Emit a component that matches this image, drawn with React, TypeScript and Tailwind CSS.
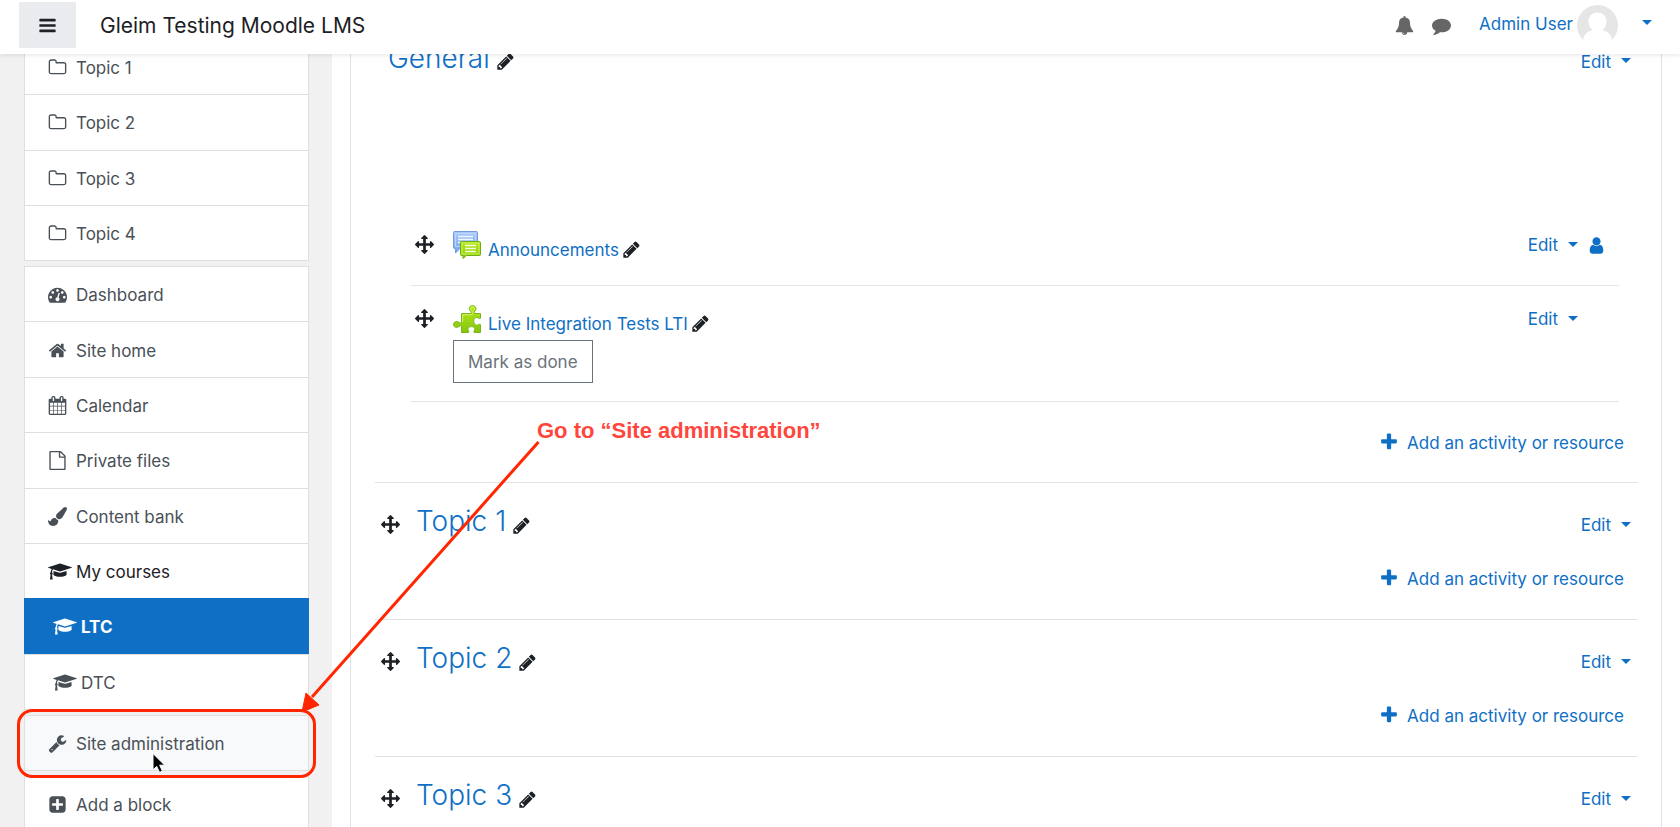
import type { ReactNode } from "react";

const paths = {
  bell: "M912 1696q0-16-16-16-59 0-101.5-42.5t-42.5-101.5q0-16-16-16t-16 16q0 73 51.5 124.5t124.5 51.5q16 0 16-16zm816-288q0 52-38 90t-90 38h-448q0 106-75 181t-181 75-181-75-75-181h-448q-52 0-90-38t-38-90q50-42 91-88t85-119.5 74.5-158.5 50-206 19.5-260q0-152 117-282.5t307-158.5q-8-19-8-39 0-40 28-68t68-28 68 28 28 68q0 20-8 39 190 28 307 158.5t117 282.5q0 139 19.5 260t50 206 74.5 158.5 85 119.5 91 88z",
  comment: "M1792 896q0 174-120 321.5t-326 233-450 85.5q-70 0-145-8-198 175-460 242-49 14-114 22-17 2-30.5-9t-17.5-29v-1q-3-4-.5-12t2-10 4.5-9.5l6-9 7-8.5 8-9q7-8 31-34.5t34.5-38 31-39.5 32.5-51 27-59 26-76q-157-89-247.5-220t-90.5-281q0-130 71-248.5t191-204.5 286-136.5 348-50.5q244 0 450 85.5t326 233 120 321.5z",
  home: "M1472 992v480q0 26-19 45t-45 19h-384v-384h-256v384h-384q-26 0-45-19t-19-45v-480q0-1 .5-3t.5-3l575-474 575 474q1 2 1 6zm223-69l-62 74q-8 9-21 11h-3q-13 0-21-7l-692-577-692 577q-12 8-24 7-13-2-21-11l-62-74q-8-10-7-23.5t11-21.5l719-599q32-26 76-26t76 26l244 204v-195q0-14 9-23t23-9h192q14 0 23 9t9 23v408l219 182q10 8 11 21.5t-7 23.5z",
  folder: "M1600 1312v-704q0-40-28-68t-68-28h-704q-40 0-68-28t-28-68v-64q0-40-28-68t-68-28h-320q-40 0-68 28t-28 68v960q0 40 28 68t68 28h1216q40 0 68-28t28-68zm128-704v704q0 92-66 158t-158 66h-1216q-92 0-158-66t-66-158v-960q0-92 66-158t158-66h320q92 0 158 66t66 158v32h672q92 0 158 66t66 158z",
  dashboard: "M384 1152q0-53-37.5-90.5t-90.5-37.5-90.5 37.5-37.5 90.5 37.5 90.5 90.5 37.5 90.5-37.5 37.5-90.5zm192-448q0-53-37.5-90.5t-90.5-37.5-90.5 37.5-37.5 90.5 37.5 90.5 90.5 37.5 90.5-37.5 37.5-90.5zm428 481l101-382q6-26-7.5-48.5t-38.5-29.5-48 6.5-30 39.5l-101 382q-60 5-107 43.5t-63 98.5q-20 77 20 146t117 89 146-20 89-117q16-60-6-117t-72-91zm660-33q0-53-37.5-90.5t-90.5-37.5-90.5 37.5-37.5 90.5 37.5 90.5 90.5 37.5 90.5-37.5 37.5-90.5zm-640-640q0-53-37.5-90.5t-90.5-37.5-90.5 37.5-37.5 90.5 37.5 90.5 90.5 37.5 90.5-37.5 37.5-90.5zm448 192q0-53-37.5-90.5t-90.5-37.5-90.5 37.5-37.5 90.5 37.5 90.5 90.5 37.5 90.5-37.5 37.5-90.5zm320 448q0 261-141 483-19 29-54 29h-1402q-35 0-54-29-141-221-141-483 0-182 71-348t191-286 286-191 348-71 348 71 286 191 191 286 71 348z",
  calendar: "M192 1664h288v-288h-288v288zm352 0h320v-288h-320v288zm-352-352h288v-320h-288v320zm352 0h320v-320h-320v320zm-352-384h288v-288h-288v288zm736 736h320v-288h-320v288zm-384-736h320v-288h-320v288zm768 736h288v-288h-288v288zm-384-352h320v-320h-320v320zm-352-864v-288q0-13-9.5-22.5t-22.5-9.5h-64q-13 0-22.5 9.5t-9.5 22.5v288q0 13 9.5 22.5t22.5 9.5h64q13 0 22.5-9.5t9.5-22.5zm736 864h288v-320h-288v320zm-384-384h320v-288h-320v288zm384 0h288v-288h-288v288zm32-480v-288q0-13-9.5-22.5t-22.5-9.5h-64q-13 0-22.5 9.5t-9.5 22.5v288q0 13 9.5 22.5t22.5 9.5h64q13 0 22.5-9.5t9.5-22.5zm384-64v1280q0 52-38 90t-90 38h-1408q-52 0-90-38t-38-90v-1280q0-52 38-90t90-38h128v-96q0-66 47-113t113-47h64q66 0 113 47t47 113v96h384v-96q0-66 47-113t113-47h64q66 0 113 47t47 113v96h128q52 0 90 38t38 90z",
  file: "M1596 380q28 28 48 76t20 88v1152q0 40-28 68t-68 28h-1344q-40 0-68-28t-28-68v-1600q0-40 28-68t68-28h896q40 0 88 20t76 48zm-444-244v376h376q-10-29-22-41l-313-313q-12-12-41-22zm384 1528v-1024h-416q-40 0-68-28t-28-68v-416h-768v1536h1280z",
  brush: "M1615 0q70 0 122.5 46.5t52.5 116.5q0 63-45 151-332 629-465 752-97 91-218 91-126 0-216.5-92.5t-90.5-219.5q0-128 92-212l638-579q59-54 130-54zm-909 1034q39 76 106.5 130t150.5 76l1 71q4 213-129.5 347t-348.5 134q-123 0-218-46.5t-152.5-127.5-86.5-183-29-220q7 5 41 30t62 44.5 59 36.5 46 17q41 0 55-37 25-66 57.5-112.5t69.5-76 88-47.5 103-25.5 125-10.5z",
  cap: "M1774 836l18 316q4 69-82 128t-235 93.5-323 34.5-323-34.5-235-93.5-82-128l18-316 574 181q22 7 48 7t48-7zm530-324q0 23-22 31l-1120 352q-4 1-10 1t-10-1l-652-206q-43 34-71 111.5t-34 178.5q63 36 63 109 0 69-58 107l58 433q2 14-8 25-9 11-24 11h-192q-15 0-24-11-10-11-8-25l58-433q-58-38-58-107 0-73 65-111 11-207 98-330l-333-104q-22-8-22-31t22-31l1120-352q4-1 10-1t10 1l1120 352q22 8 22 31z",
  wrench: "M448 1472q0-26-19-45t-45-19-45 19-19 45 19 45 45 19 45-19 19-45zm644-420l-682 682q-37 37-90 37-52 0-91-37l-106-108q-38-36-38-90 0-53 38-91l681-681q39 98 114.5 173.5t173.5 114.5zm634-435q0 39-23 106-47 134-164.5 217.5t-258.5 83.5q-185 0-316.5-131.5t-131.5-316.5 131.5-316.5 316.5-131.5q58 0 121.5 16.5t107.5 46.5q16 11 16 28t-16 28l-293 169v224l193 107q5-3 79-48.5t135.5-81 70.5-35.5q15 0 23.5 10t8.5 25z",
  plusSquare: "M1408 960v-128q0-26-19-45t-45-19h-320v-320q0-26-19-45t-45-19h-128q-26 0-45 19t-19 45v320h-320q-26 0-45 19t-19 45v128q0 26 19 45t45 19h320v320q0 26 19 45t45 19h128q26 0 45-19t19-45v-320h320q26 0 45-19t19-45zm256-544v960q0 119-84.5 203.5t-203.5 84.5h-960q-119 0-203.5-84.5t-84.5-203.5v-960q0-119 84.5-203.5t203.5-84.5h960q119 0 203.5 84.5t84.5 203.5z",
  plus: "M1600 736v192q0 40-28 68t-68 28h-416v416q0 40-28 68t-68 28h-192q-40 0-68-28t-28-68v-416h-416q-40 0-68-28t-28-68v-192q0-40 28-68t68-28h416v-416q0-40 28-68t68-28h192q40 0 68 28t28 68v416h416q40 0 68 28t28 68z",
  bars: "M1664 1344v128q0 26-19 45t-45 19h-1408q-26 0-45-19t-19-45v-128q0-26 19-45t45-19h1408q26 0 45 19t19 45zm0-512v128q0 26-19 45t-45 19h-1408q-26 0-45-19t-19-45v-128q0-26 19-45t45-19h1408q26 0 45 19t19 45zm0-512v128q0 26-19 45t-45 19h-1408q-26 0-45-19t-19-45v-128q0-26 19-45t45-19h1408q26 0 45 19t19 45z",
  arrows: "M1792 896q0 26-19 45l-256 256q-19 19-45 19t-45-19-19-45v-128h-384v384h128q26 0 45 19t19 45-19 45l-256 256q-19 19-45 19t-45-19l-256-256q-19-19-19-45t19-45 45-19h128v-384h-384v128q0 26-19 45t-45 19-45-19l-256-256q-19-19-19-45t19-45l256-256q19-19 45-19t45 19 19 45v128h384v-384h-128q-26 0-45-19t-19-45 19-45l256-256q19-19 45-19t45 19l256 256q19 19 19 45t-19 45-45 19h-128v384h384v-128q0-26 19-45t45-19 45 19l256 256q19 19 19 45z",
  pencil: "M491 1536l91-91-235-235-91 91v107h128v128h107zm523-928q0-22-22-22-10 0-17 7l-542 542q-7 7-7 17 0 22 22 22 10 0 17-7l542-542q7-7 7-17zm-54-192l416 416-832 832h-416v-416zm683 96q0 53-37 90l-166 166-416-416 166-165q36-38 90-38 53 0 91 38l235 234q37 39 37 91z",
  user: "M1536 1399q0 109-62.5 187t-150.5 78h-854q-88 0-150.5-78t-62.5-187q0-85 8.5-160.5t31.5-152 58.5-131 94-89 134.5-34.5q131 128 313 128t313-128q76 0 134.5 34.5t94 89 58.5 131 31.5 152 8.5 160.5zm-256-887q0 159-112.5 271.5t-271.5 112.5-271.5-112.5-112.5-271.5 112.5-271.5 271.5-112.5 271.5 112.5 112.5 271.5z",
};

type IconName = keyof typeof paths;

function Icon({ name, className = "size-[19px]" }: { name: IconName; className?: string }) {
  return (
    <svg
      aria-hidden="true"
      viewBox={name === "cap" ? "0 0 2304 1792" : "0 0 1792 1792"}
      className={`shrink-0 fill-current ${name === "cap" ? "h-[19px] w-6" : className}`}
    >
      <path d={paths[name]} />
    </svg>
  );
}

function Caret() {
  return (
    <svg aria-hidden="true" viewBox="0 0 10 5" className="h-[5px] w-[10px] shrink-0 fill-current">
      <path d="M0 0h10L5 5z" />
    </svg>
  );
}

function NavItem({ icon, label, tone = "normal", indent = false }: {
  icon: IconName;
  label: string;
  tone?: "normal" | "dark" | "active" | "hover";
  indent?: boolean;
}) {
  const tones = {
    normal: "border-[#dfdfdf] bg-white text-[#495057]",
    dark: "border-[#dfdfdf] bg-white text-[#1d2125]",
    active: "border-[#0f6fc5] bg-[#0f6fc5] font-bold text-white",
    hover: "border-[#dfdfdf] bg-[#f8f9fa] text-[#495057]",
  };
  return (
    <li className="flex min-h-[55px] flex-1">
      <a
        href="#"
        className={`-mb-px flex flex-1 items-center border pt-[2px] text-[17px] leading-6 ${tones[tone]} ${indent ? "pl-[28px]" : "pl-[23px]"}`}
      >
        <span className="flex w-7 shrink-0 pb-px">
          <Icon name={icon} />
        </span>
        {label}
      </a>
    </li>
  );
}

function EditMenu() {
  return (
    <button type="button" className="flex items-center gap-[10px] text-[17px] leading-6 text-[#0f6fc5]">
      Edit
      <span className="pb-[2px]"><Caret /></span>
    </button>
  );
}

function PencilButton({ label }: { label: string }) {
  return (
    <button type="button" aria-label={label} className="text-[#1d2125]">
      <Icon name="pencil" />
    </button>
  );
}

function AddActivity() {
  return (
    <div className="flex justify-end pr-[14px]">
      <button type="button" className="flex items-center gap-2 text-[17px] leading-6 text-[#0f6fc5]">
        <span className="pb-[2px]"><Icon name="plus" className="size-5" /></span>
        Add an activity or resource
      </button>
    </div>
  );
}

function ForumIcon() {
  return (
    <svg aria-hidden="true" viewBox="0 0 28 28" className="size-7 shrink-0">
      <defs>
        <linearGradient id="forum-blue" x1="0" y1="0" x2="0" y2="1">
          <stop offset="0" stopColor="#a9cbfb" />
          <stop offset="1" stopColor="#74a3e8" />
        </linearGradient>
        <linearGradient id="forum-green" x1="0" y1="0" x2="0" y2="1">
          <stop offset="0" stopColor="#b5e61a" />
          <stop offset="1" stopColor="#8ccc0c" />
        </linearGradient>
      </defs>
      <path d="M1.5.5h22a1 1 0 0 1 1 1v15a1 1 0 0 1-1 1H7L2.500 22v-4.500h-1a1 1 0 0 1-1-1v-15a1 1 0 0 1 1-1z" fill="url(#forum-blue)" stroke="#6f9bdf" />
      <path d="M2.500 2.500h20v13h-20z" fill="none" stroke="#bdd7fd" />
      <path d="M5 5.500h15M5 8.500h15M5 11.500h4" stroke="#eef5ff" strokeWidth="1.300" />
      <path d="M8.500 10.500h18a1 1 0 0 1 1 1v12a1 1 0 0 1-1 1H13.500L10 27.500v-3H8.500a1 1 0 0 1-1-1v-12a1 1 0 0 1 1-1z" fill="url(#forum-green)" stroke="#6fae12" />
      <path d="M9 12h17v11H9z" fill="none" stroke="#cdf25a" />
      <path d="M12 14.500h11M12 17.500h11M12 20.500h11" stroke="#f6ffdc" strokeWidth="1.300" />
    </svg>
  );
}

function PuzzleIcon() {
  return (
    <svg aria-hidden="true" viewBox="0 0 28 28" className="size-7 shrink-0">
      <defs>
        <linearGradient id="puzzle-green" x1="0" y1="0" x2="0" y2="1">
          <stop offset="0" stopColor="#b7ea1e" />
          <stop offset="1" stopColor="#84c50e" />
        </linearGradient>
      </defs>
      <path
        d="M8.500 8.500h9.500c.8-1 .2-1.800-.8-2.700C15.200 3.500 16.600.6 19.500.6s4.500 2.900 2.700 5.200c-.9.900-1.300 1.700-.5 2.700h5.800v4.700c-1 .7-1.700.2-2.500-.3-2.100-1.300-4.300.5-4.300 3.300s2.200 4.900 4.400 3.600c.8-.5 1.400-.8 2.400-.1v7.800h-6.300c-.7-.8-.3-1.500.2-2.200 1.200-1.900-.5-3.700-3-3.700s-4.200 1.800-3.100 3.700c.5.700.9 1.400.2 2.200h-7v-6.300c-.7-.9-1.400-.4-2.200.2C3.400 23.100.5 22.200.5 19.500s2.900-3.900 5.300-2.300c.9.700 1.900 1.200 2.700.3z"
        fill="url(#puzzle-green)"
        stroke="#79b41b"
      />
      <path d="M9.700 17V9.700h9.200c1.800-1.800.4-3.300-.6-4.300-1.200-1.400-.5-3.500 1.200-3.500s2.600 2 1.300 3.500" fill="none" stroke="#d3f56c" />
    </svg>
  );
}

function Activity({ icon, name, action, children }: {
  icon: ReactNode;
  name: string;
  action?: ReactNode;
  children?: ReactNode;
}) {
  return (
    <li className="flex items-start border-b border-[#e4e6e9] pr-[14px] pt-[19px]">
      <button type="button" aria-label={`Move ${name}`} className="mt-1 pl-1 text-[#1d2125]">
        <Icon name="arrows" />
      </button>
      <div className="flex-1 pl-[19px]">
        <div className="flex items-start">
          {icon}
          <div className="flex items-center gap-[3px] pl-[7px] pt-[7px]">
            <a href="#" className="text-[17px] leading-6 text-[#0f6fc5]">{name}</a>
            <span className="flex pb-[2px]">
              <PencilButton label={`Edit title of ${name}`} />
            </span>
          </div>
        </div>
        {children}
      </div>
      <div className="flex items-center gap-[9px] pt-[2px]">
        <EditMenu />
        <span className="flex w-[18px] text-[#0f6fc5]">{action}</span>
      </div>
    </li>
  );
}

function TopicSection({ name, children }: { name: string; children?: ReactNode }) {
  return (
    <section className="min-h-[137px] border-t border-[#e1e4e7] pt-[19px]">
      <div className="flex items-center justify-between pr-[7px]">
        <div className="flex items-center">
          <button type="button" aria-label={`Move ${name}`} className="pl-[6px] pt-[5px] text-[#1d2125]">
            <Icon name="arrows" />
          </button>
          <h3 className="pb-[2px] pl-4 text-[28px] font-light leading-[38px]">
            <a href="#" className="text-[#0f6fc5]">{name}</a>
          </h3>
          <div className="flex pl-[6px] pt-[6px]">
            <PencilButton label={`Edit ${name}`} />
          </div>
        </div>
        <div className="pt-[6px]">
          <EditMenu />
        </div>
      </div>
      <div className="pt-[25px]">{children}</div>
    </section>
  );
}

function Annotation() {
  return (
    <div className="pointer-events-none absolute left-0 top-0 z-20">
      <svg aria-hidden="true" width="560" height="827" viewBox="0 0 560 827">
        <rect x="18.500" y="710.500" width="296" height="66" rx="14" fill="none" stroke="#ff2600" strokeWidth="3" />
        <path d="M538.500 442 312 697" stroke="#ff2600" strokeWidth="3" />
        <path d="M302 712l4-19 13 12z" fill="#ff2600" stroke="#ff2600" />
        <path d="M153 753.500v16.300l3.700-3.400 2.900 6 2.800-1.300-2.700-5.900h5z" fill="#000" stroke="#fff" strokeWidth="1" />
      </svg>
      <p className="absolute left-[537px] top-[417px] whitespace-nowrap font-['Liberation_Sans',Arial,sans-serif] text-[22px] font-bold leading-7 text-[#ff463c]">
        Go to “Site administration”
      </p>
    </div>
  );
}

export default function App() {
  return (
    <div className="relative h-screen overflow-hidden bg-white font-['Inter',sans-serif] text-[#1d2125]">
      <header className="relative z-10 flex h-[54px] items-center bg-white pb-1 pl-[19px] pr-7 shadow-[0_2px_4px_rgba(0,0,0,0.08)]">
        <button type="button" aria-label="Side panel" className="flex h-[46px] w-[57px] items-center justify-center bg-[#e9ebef]">
          <Icon name="bars" />
        </button>
        <a href="#" className="pl-6 pt-[2px] text-[21px] leading-8">Gleim Testing Moodle LMS</a>
        <div className="ml-auto flex items-center">
          <button type="button" aria-label="Notifications" className="text-[#666]">
            <Icon name="bell" />
          </button>
          <button type="button" aria-label="Messages" className="pl-[18px] text-[#666]">
            <Icon name="comment" />
          </button>
          <button type="button" className="flex items-center pl-7 text-[17px] leading-6 text-[#0f6fc5]">
            <span className="pb-[2px]">Admin User</span>
            <svg aria-hidden="true" viewBox="0 0 41 41" className="ml-1 size-[41px] shrink-0">
              <circle cx="20.500" cy="20.500" r="20.500" fill="#e6e6e6" />
              <path d="M20.500 7.500c5.500 0 9 3.800 9 9 0 3.200-1.300 6.300-3.500 8v1c5 .8 8.200 4.300 9 9.800a20.500 20.500 0 0 1-29 0c.8-5.500 4-9 9-9.800v-1c-2.200-1.700-3.500-4.800-3.500-8 0-5.200 3.500-9 9-9z" fill="#fff" />
            </svg>
            <span className="pb-[6px] pl-6"><Caret /></span>
          </button>
        </div>
      </header>

      <div className="-mt-[15px] flex min-h-full">
        <nav className="flex w-[332px] shrink-0 flex-col gap-[6px] bg-[#f1f1f1] pl-6 pr-[23px]">
          <ul className="flex min-h-[221px] flex-col">
            <NavItem icon="folder" label="Topic 1" />
            <NavItem icon="folder" label="Topic 2" />
            <NavItem icon="folder" label="Topic 3" />
            <NavItem icon="folder" label="Topic 4" />
          </ul>
          <ul className="flex min-h-[443px] flex-col">
            <NavItem icon="dashboard" label="Dashboard" />
            <NavItem icon="home" label="Site home" />
            <NavItem icon="calendar" label="Calendar" />
            <NavItem icon="file" label="Private files" />
            <NavItem icon="brush" label="Content bank" />
            <NavItem icon="cap" label="My courses" tone="dark" />
            <NavItem icon="cap" label="LTC" tone="active" indent />
            <NavItem icon="cap" label="DTC" indent />
          </ul>
          <ul className="flex flex-col">
            <NavItem icon="wrench" label="Site administration" tone="hover" />
          </ul>
          <ul className="flex flex-col">
            <NavItem icon="plusSquare" label="Add a block" />
          </ul>
        </nav>

        <main className="flex min-w-0 flex-1 px-[18px]">
          <div className="flex-1 border-x border-[#dee2e6] pl-6 pr-[23px]">
            <section className="min-h-[443px]">
              <div className="flex items-center justify-between pl-[13px] pr-[7px]">
                <div className="flex items-center">
                  <h3 className="pb-[2px] text-[28px] font-light leading-[38px]">
                    <a href="#" className="text-[#0f6fc5]">General</a>
                  </h3>
                  <div className="flex pl-[6px] pt-1">
                    <PencilButton label="Edit General" />
                  </div>
                </div>
                <div className="pt-[5px]">
                  <EditMenu />
                </div>
              </div>
              <ul className="pl-9 pr-[19px] pt-[133px]">
                <Activity icon={<ForumIcon />} name="Announcements" action={<Icon name="user" />}>
                  <div className="h-[23px]" />
                </Activity>
                <Activity icon={<PuzzleIcon />} name="Live Integration Tests LTI">
                  <button
                    type="button"
                    className="mb-[18px] mt-1 block border border-[#6a737b] px-[14px] pb-2 pt-[9px] text-[17px] leading-6 text-[#6a737b]"
                  >
                    Mark as done
                  </button>
                </Activity>
              </ul>
              <div className="pt-[29px]">
                <AddActivity />
              </div>
            </section>
            <TopicSection name="Topic 1">
              <AddActivity />
            </TopicSection>
            <TopicSection name="Topic 2">
              <AddActivity />
            </TopicSection>
            <TopicSection name="Topic 3" />
          </div>
        </main>
      </div>
      <Annotation />
    </div>
  );
}
